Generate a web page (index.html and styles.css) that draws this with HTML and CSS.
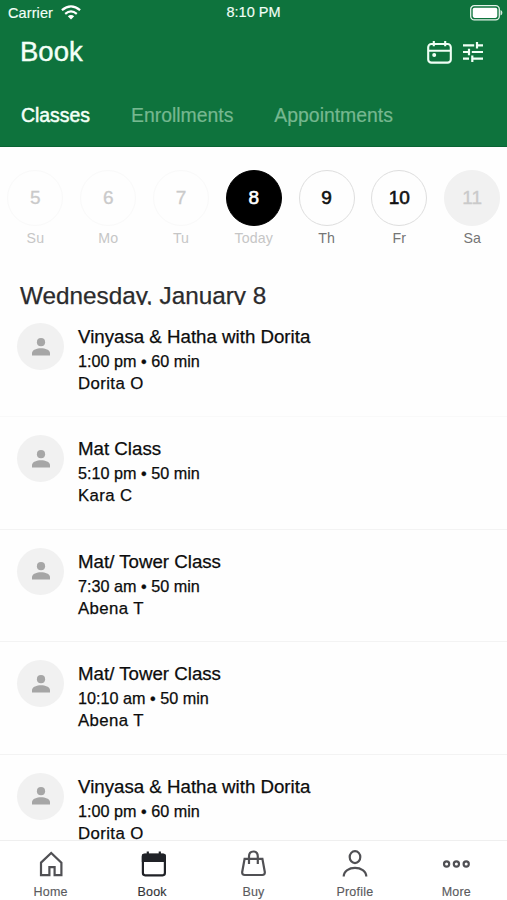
FILE: index.html
```html
<!DOCTYPE html>
<html lang="en">
<head>
<meta charset="utf-8">
<title>Book</title>
<link rel="stylesheet" href="styles.css">
</head>
<body>
<div class="app">
  <header class="header">
    <div class="status">
      <div class="carrier"><span>Carrier</span>
        <svg width="20" height="15" viewBox="0 0 20 15" fill="none" stroke="#fff" stroke-width="2.2"><path d="M.9 5.2Q10-2.6 19.1 5.2M4.2 8.8Q10 3.9 15.8 8.8"/><path d="M6.8 11.2Q10 8.8 13.2 11.2L10 14.6Z" fill="#fff" stroke="none"/></svg>
      </div>
      <span class="clock">8:10 PM</span>
      <svg class="battery" width="33" height="16" viewBox="0 0 33 16"><rect x=".7" y=".7" width="28.6" height="14.2" rx="3.6" fill="none" stroke="#e4f3ea" stroke-width="1.3"/><rect x="2.7" y="2.7" width="24.6" height="10.2" rx="1.8" fill="#fff"/><path d="M30.5 5v5.6q1.9-.7 1.9-2.8t-1.9-2.8Z" fill="#d5eadd"/></svg>
    </div>
    <div class="titlebar">
      <h1>Book</h1>
      <div class="actions">
        <svg width="25" height="23" viewBox="0 0 25 23" fill="none" stroke="#effff5" stroke-width="2.1"><rect x="1.2" y="3" width="22.6" height="18.6" rx="3.2"/><path d="M1.2 9.8h22.6M6.8 0v5.2M18.2 0v5.2"/><circle cx="7.2" cy="14" r="2" fill="#effff5" stroke="none"/></svg>
        <svg width="20" height="20" viewBox="0 0 20 20" fill="none" stroke="#effff5" stroke-width="2.2"><path d="M0 3.3h11.2M14 3.3h6M14 .1v6.4M0 10h6M8.8 10H20M6 6.8v6.4M0 16.7h6M9.3 16.7H20M9.3 13.5v6.4"/></svg>
      </div>
    </div>
    <nav class="tabs">
      <span class="tab active">Classes</span>
      <span class="tab">Enrollments</span>
      <span class="tab">Appointments</span>
    </nav>
  </header>

  <section class="week">
    <div class="day past"><b>5</b><span>Su</span></div>
    <div class="day past"><b>6</b><span>Mo</span></div>
    <div class="day past"><b>7</b><span>Tu</span></div>
    <div class="day today"><b>8</b><span>Today</span></div>
    <div class="day"><b>9</b><span>Th</span></div>
    <div class="day"><b>10</b><span>Fr</span></div>
    <div class="day closed"><b>11</b><span>Sa</span></div>
  </section>

  <h2>Wednesday, January 8</h2>

  <main class="list">
    <article class="row">
      <div class="avatar"><svg width="18" height="18" viewBox="0 0 18 18"><circle cx="9" cy="4.2" r="4.1"/><path d="M0 17.6v-2.5C0 11.8 5 10.3 9 10.3s9 1.5 9 4.8v2.5Z"/></svg></div>
      <div class="info"><h3>Vinyasa &amp; Hatha with Dorita</h3><p class="time">1:00 pm • 60 min</p><p class="staff">Dorita O</p></div>
    </article>
    <article class="row">
      <div class="avatar"><svg width="18" height="18" viewBox="0 0 18 18"><circle cx="9" cy="4.2" r="4.1"/><path d="M0 17.6v-2.5C0 11.8 5 10.3 9 10.3s9 1.5 9 4.8v2.5Z"/></svg></div>
      <div class="info"><h3>Mat Class</h3><p class="time">5:10 pm • 50 min</p><p class="staff">Kara C</p></div>
    </article>
    <article class="row">
      <div class="avatar"><svg width="18" height="18" viewBox="0 0 18 18"><circle cx="9" cy="4.2" r="4.1"/><path d="M0 17.6v-2.5C0 11.8 5 10.3 9 10.3s9 1.5 9 4.8v2.5Z"/></svg></div>
      <div class="info"><h3>Mat/ Tower Class</h3><p class="time">7:30 am • 50 min</p><p class="staff">Abena T</p></div>
    </article>
    <article class="row">
      <div class="avatar"><svg width="18" height="18" viewBox="0 0 18 18"><circle cx="9" cy="4.2" r="4.1"/><path d="M0 17.6v-2.5C0 11.8 5 10.3 9 10.3s9 1.5 9 4.8v2.5Z"/></svg></div>
      <div class="info"><h3>Mat/ Tower Class</h3><p class="time">10:10 am • 50 min</p><p class="staff">Abena T</p></div>
    </article>
    <article class="row">
      <div class="avatar"><svg width="18" height="18" viewBox="0 0 18 18"><circle cx="9" cy="4.2" r="4.1"/><path d="M0 17.6v-2.5C0 11.8 5 10.3 9 10.3s9 1.5 9 4.8v2.5Z"/></svg></div>
      <div class="info"><h3>Vinyasa &amp; Hatha with Dorita</h3><p class="time">1:00 pm • 60 min</p><p class="staff">Dorita O</p></div>
    </article>
  </main>

  <footer class="bottom">
    <div class="item"><svg width="30" height="30" viewBox="0 0 30 30"><path d="M5 13.6 15.2 3.9l10.2 9.7v12.5h-6.8v-8h-5.2v8H5Z"/></svg><span>Home</span></div>
    <div class="item current"><svg width="30" height="30" viewBox="0 0 30 30"><rect x="5.9" y="5.7" width="22" height="20.6" rx="2.2"/><path d="M4.8 6.8q0-2 2-2h20q2 0 2 2V13h-24Z" class="solid"/><path d="M10.8 2.5v4M22.8 2.5v4"/></svg><span>Book</span></div>
    <div class="item"><svg width="30" height="30" viewBox="0 0 30 30"><path d="M6.6 9.8h17.8l2.4 13.2q.3 3-2.6 3H6.8q-2.9 0-2.6-3ZM11 15V7.4Q11 2.5 15.4 2.5t4.4 4.9V15"/></svg><span>Buy</span></div>
    <div class="item"><svg width="30" height="30" viewBox="0 0 30 30"><ellipse cx="15" cy="8.1" rx="5.3" ry="6"/><path d="M3.7 27.6C3.7 16 26.3 16 26.3 27.6"/></svg><span>Profile</span></div>
    <div class="item"><svg width="30" height="30" viewBox="0 0 30 30"><circle cx="5.6" cy="15" r="2.6"/><circle cx="15.4" cy="15" r="2.6"/><circle cx="25.2" cy="15" r="2.6"/></svg><span>More</span></div>
  </footer>
</div>
</body>
</html>
```
FILE: styles.css
```css
* { box-sizing: border-box; margin: 0; padding: 0; }
body { font-family: "Liberation Sans", Arial, sans-serif; background: #fff; overflow: hidden; }
svg { display: block; flex: none; }
.app { width: 507px; height: 900px; display: flex; flex-direction: column; overflow: hidden; background: #fefefe; }

.header { flex: none; height: 147px; background: #0e733d; border-bottom: 1px solid #0a6434; color: #f3fff7; }
.status { height: 25px; display: grid; grid-template-columns: 1fr auto 1fr; align-items: center; padding: 0 4px 0 8px; font-size: 14.5px; line-height: 24px; -webkit-text-stroke: .15px; }
.carrier { display: flex; align-items: center; gap: 8px; letter-spacing: .1px; }
.clock { margin: -2px 4px 0 0; }
.battery { justify-self: end; }
.titlebar { height: 54px; display: flex; justify-content: space-between; align-items: center; padding: 0 24px 0 20px; }
h1 { font-size: 27.5px; font-weight: 400; line-height: 54px; -webkit-text-stroke: .4px; }
.actions { display: flex; align-items: center; gap: 11px; }
.tabs { display: flex; padding: 20px 0 0 21px; font-size: 19.4px; line-height: 32px; }
.tab { color: #76b890; margin-right: 41px; -webkit-text-stroke: .2px; }
.tab.active { color: #f3fff7; -webkit-text-stroke: .5px; }

.week { flex: none; display: grid; grid-template-columns: repeat(7, 72.8px); height: 132px; padding-top: 23px; margin-left: -1px; }
.day { display: flex; flex-direction: column; align-items: center; color: #757575; }
.day b { width: 56px; height: 56px; border: 1px solid #dedede; border-radius: 50%; font-size: 19px; font-weight: 400; line-height: 54px; text-align: center; color: #111; -webkit-text-stroke: .6px; }
.day span { font-size: 14.2px; line-height: 25px; letter-spacing: .1px; }
.past, .today { color: #c6c6c6; }
.past b { color: #cacaca; border-color: #f9f9f9; -webkit-text-stroke: .3px; }
.today b { background: #000; border-color: #000; color: #fff; }
.closed b { background: #f1f1f1; border-color: #f1f1f1; color: #cacaca; -webkit-text-stroke: .3px; }

h2 { flex: none; height: 26px; overflow: hidden; padding-left: 20px; font-size: 24.3px; line-height: 34px; font-weight: 400; color: #2b2b2d; -webkit-text-stroke: .25px; }

.list { flex: 1; min-height: 0; overflow: hidden; }
.row { height: 112.4px; display: flex; padding: 18px 17px 0; border-bottom: 1px solid #f3f3f3; }
.row:first-child { border-color: #f9f9f9; }
.avatar { flex: none; width: 47px; height: 47px; border-radius: 50%; background: #f1f1f1; display: grid; place-items: center; fill: #a6a6a6; }
.info { padding: 1px 0 0 14px; color: #0c0c0c; -webkit-text-stroke: .25px; }
h3 { font-size: 18.7px; font-weight: 400; line-height: 26px; }
.time { font-size: 16.2px; line-height: 23px; }
.staff { font-size: 16.8px; line-height: 22px; letter-spacing: .4px; }

.bottom { flex: none; height: 60px; border-top: 1px solid #efefef; display: grid; grid-template-columns: repeat(5, 1fr); background: #fff; }
.item { display: flex; flex-direction: column; align-items: center; padding-top: 8px; color: #5b5b5e; font-size: 12.5px; letter-spacing: .2px; line-height: 26px; -webkit-text-stroke: .15px; }
.item svg { fill: none; stroke: #505054; stroke-width: 2.2; }
.current { color: #333336; }
.current svg { stroke: #202227; }
.item .solid { fill: #202227; stroke: none; }
```
